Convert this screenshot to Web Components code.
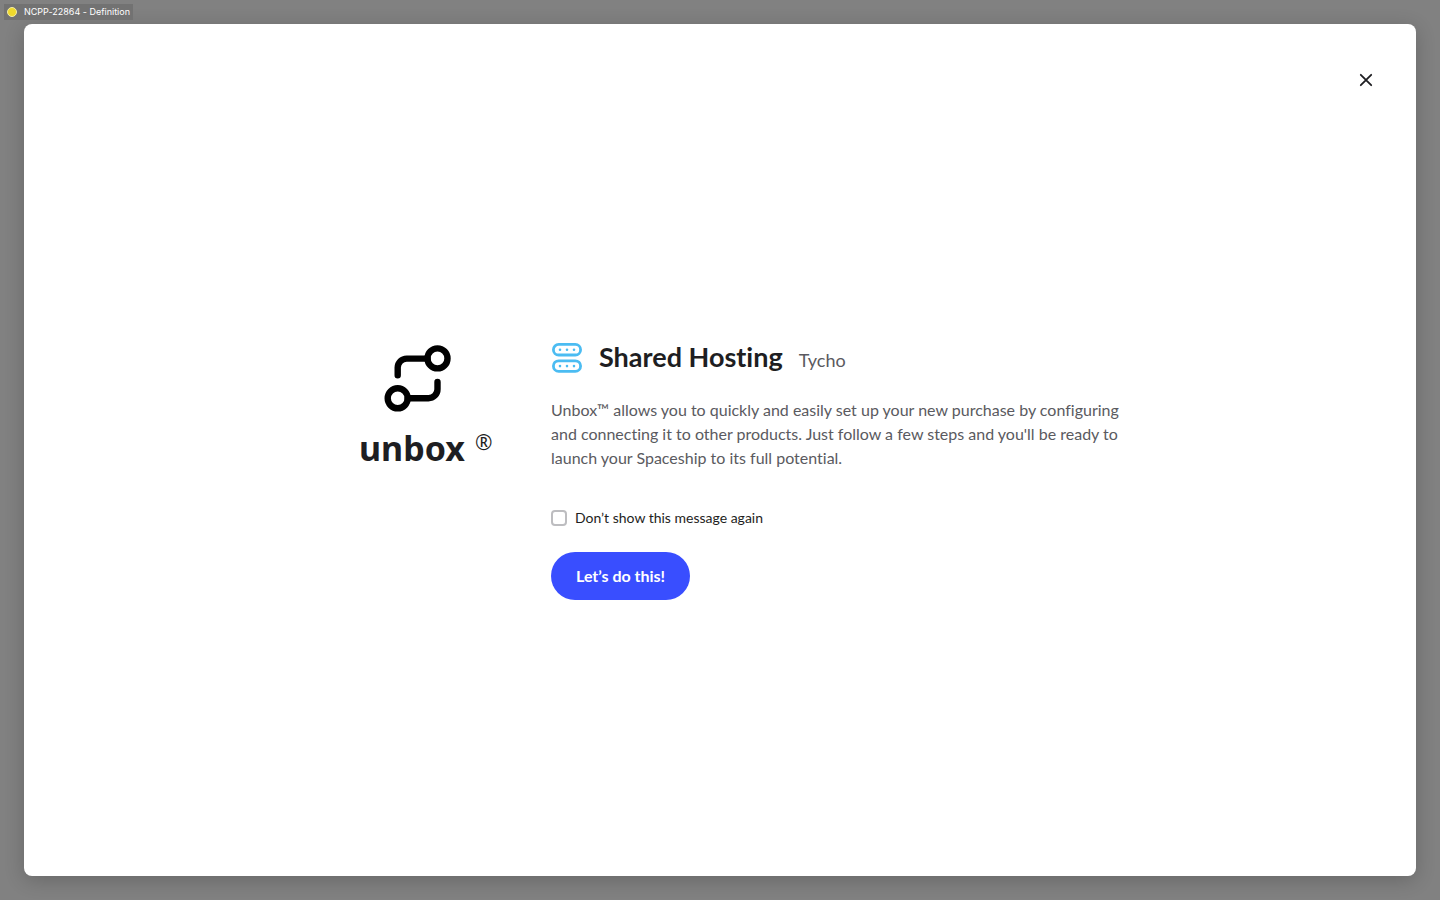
<!DOCTYPE html>
<html lang="en">
<head>
<meta charset="utf-8">
<title>Unbox</title>
<style>
  html, body { margin: 0; height: 100%; }
  body { background: #818181; color: #1e1e22; font-family: Lato, "Open Sans", sans-serif; font-variant-ligatures: none; }
</style>
</head>
<body>
<unbox-page></unbox-page>

<template id="page-tpl">
  <style>
    :host { display: block; position: relative; box-sizing: border-box; min-height: 100vh; padding: 24px; }
    modal-card { min-height: calc(100vh - 48px); }
    status-tag { position: absolute; left: 4px; top: 4px; }
  </style>
  <status-tag>NCPP-22864 - Definition</status-tag>
  <modal-card>
    <unbox-logo slot="aside">unbox</unbox-logo>
    <product-heading>Shared Hosting<span slot="detail">Tycho</span></product-heading>
    <intro-text>Unbox™ allows you to quickly and easily set up your new purchase by configuring and connecting it to other products. Just follow a few steps and you'll be ready to launch your Spaceship to its full potential.</intro-text>
    <check-field>Don’t show this message again</check-field>
    <pill-button>Let’s do this!</pill-button>
  </modal-card>
</template>

<template id="tag-tpl">
  <style>
    :host { display: flex; align-items: center; gap: 7px; height: 16px; padding: 0 3px; background: #727272; color: #fff; font-family: Inter, sans-serif; font-size: 9px; line-height: 16px; white-space: nowrap; }
    i { width: 8px; height: 8px; border: 1px solid #f3eda8; border-radius: 50%; background: #efd92c; }
  </style>
  <i></i><slot></slot>
</template>

<template id="modal-tpl">
  <style>
    :host { display: flex; flex-direction: column; box-sizing: border-box; padding: 32px; border-radius: 8px; background: #fff; box-shadow: 0 4px 20px rgba(0, 0, 0, .2); }
    header { display: flex; justify-content: flex-end; height: 48px; }
    button { width: 36px; height: 48px; padding: 0; border: 0; background: none; color: #1e1e22; cursor: pointer; }
    svg { display: block; margin: auto; }
    main { flex: 1; display: flex; align-items: center; justify-content: center; padding-bottom: 8px; }
    .group { display: grid; grid-template-columns: 168px minmax(0, 576px); column-gap: 24px; width: 100%; max-width: 768px; padding-left: 46px; }
    .content { display: flex; flex-direction: column; align-items: flex-start; }
  </style>
  <header>
    <button type="button" aria-label="Close">
      <svg width="14" height="14" viewBox="0 0 14 14" fill="none" stroke="currentColor" stroke-width="1.8" stroke-linecap="round"><path d="M1.8 1.8l10.4 10.4M12.2 1.8L1.8 12.2"/></svg>
    </button>
  </header>
  <main>
    <div class="group">
      <slot name="aside"></slot>
      <div class="content"><slot></slot></div>
    </div>
  </main>
</template>

<template id="logo-tpl">
  <style>
    :host { display: block; padding-top: 4px; }
    svg { display: block; margin-left: 25px; }
    .name { display: flex; align-items: flex-start; gap: 10px; margin-top: 12px; font-family: "Noto Sans", sans-serif; font-size: 34px; font-weight: 700; line-height: 48px; }
    .mark { font-family: "Open Sans", sans-serif; font-size: 21px; font-weight: 400; line-height: 36px; }
  </style>
  <svg width="68" height="68" viewBox="0 0 68 68" fill="none" stroke="#000" stroke-width="6.4" stroke-linecap="round">
    <circle cx="53.5" cy="14.4" r="10"/><circle cx="13.7" cy="54.3" r="10"/>
    <path d="M43.5 14.6H22.7a9 9 0 0 0-9 9v7.7M23.7 54.2h20.8a9 9 0 0 0 9-9V38"/>
  </svg>
  <div class="name"><slot></slot><span class="mark">®</span></div>
</template>

<template id="heading-tpl">
  <style>
    :host { display: flex; align-items: center; gap: 16px; height: 36px; }
    h1 { display: flex; align-items: baseline; gap: 16px; margin: 0; font-size: 27px; font-weight: 700; line-height: 36px; white-space: nowrap; }
    .detail { color: #5a5a60; font-size: 18px; font-weight: 400; }
  </style>
  <svg width="32" height="32" viewBox="0 0 32 32" fill="none" stroke="#4bbcf2" stroke-width="2.8">
    <rect x="2.4" y="2.4" width="27.2" height="10.6" rx="5.3"/><rect x="2.4" y="18.8" width="27.2" height="10.6" rx="5.3"/>
    <path d="M9 7.7h.01M16 7.7h.01M23 7.7h.01M9 24.1h.01M16 24.1h.01M23 24.1h.01" stroke-width="2.6" stroke-linecap="round"/>
  </svg>
  <h1><slot></slot><span class="detail"><slot name="detail"></slot></span></h1>
</template>

<template id="intro-tpl">
  <style>
    :host { display: block; margin-top: 22px; }
    p { margin: 0; color: #5a5a60; font-size: 16px; line-height: 24px; }
  </style>
  <p><slot></slot></p>
</template>

<template id="check-tpl">
  <style>
    :host { display: block; margin-top: 36px; }
    label { display: flex; align-items: center; gap: 8px; font-size: 14px; line-height: 24px; }
    input { appearance: none; box-sizing: border-box; width: 16px; height: 16px; margin: 0; border: 2px solid #bdbdc0; border-radius: 4px; background: #fff; }
    input:checked { background: #394eff; border-color: #394eff; }
  </style>
  <label><input type="checkbox"><slot></slot></label>
</template>

<template id="button-tpl">
  <style>
    :host { display: block; margin-top: 22px; }
    button { height: 48px; padding: 0 25px; border: 0; border-radius: 24px; background: #394eff; color: #fff; font-family: inherit; font-size: 16px; font-weight: 700; line-height: 24px; cursor: pointer; }
  </style>
  <button type="button"><slot></slot></button>
</template>

<script>
  const define = (name, template) => customElements.define(name, class extends HTMLElement {
    constructor() {
      super();
      this.attachShadow({ mode: "open" }).append(document.getElementById(template).content.cloneNode(true));
    }
  });
  define("status-tag", "tag-tpl");
  define("modal-card", "modal-tpl");
  define("unbox-logo", "logo-tpl");
  define("product-heading", "heading-tpl");
  define("intro-text", "intro-tpl");
  define("check-field", "check-tpl");
  define("pill-button", "button-tpl");
  define("unbox-page", "page-tpl");
</script>
</body>
</html>
